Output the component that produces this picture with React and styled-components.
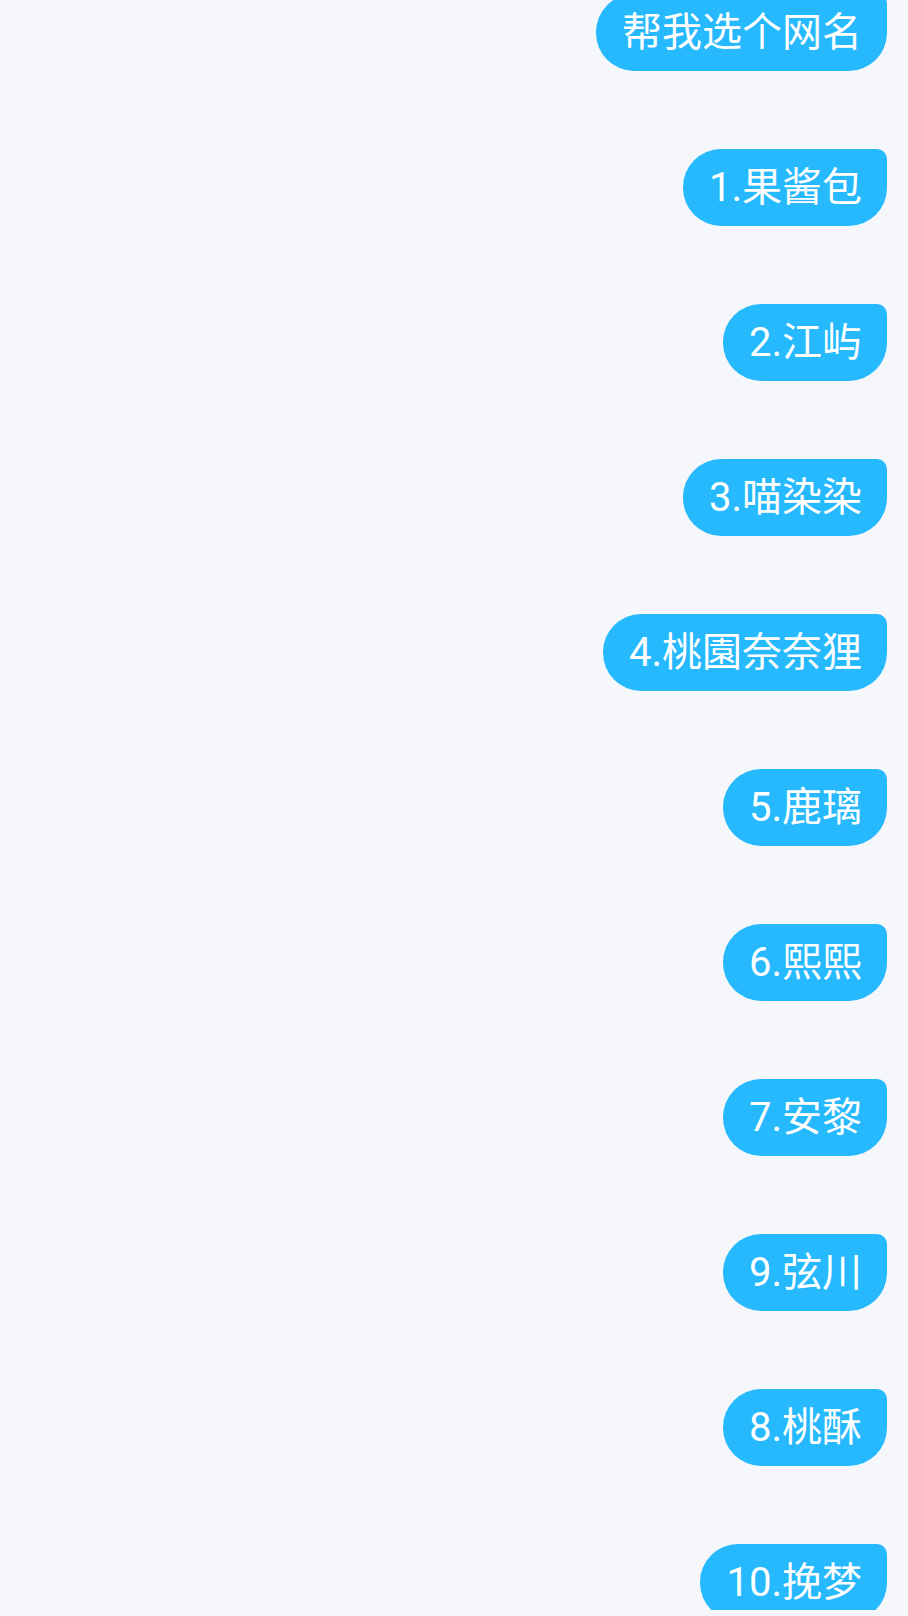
import React from 'react'
import styled, { createGlobalStyle } from 'styled-components'

const GlobalStyle = createGlobalStyle`
   html, body {
      margin: 0;
      padding: 0;
      background: #f5f7fa;
   }
`;

const names = [
   '帮我选个网名',
   '1.果酱包',
   '2.江屿',
   '3.喵染染',
   '4.桃園奈奈狸',
   '5.鹿璃',
   '6.熙熙',
   '7.安黎',
   '9.弦川',
   '8.桃酥',
   '10.挽梦',
];

const App = () => {
   return (
      <>
         <GlobalStyle />
         <Chat>
            {names.map((text, i) => (
               <Bubble key={i}>{text}</Bubble>
            ))}
         </Chat>
      </>
   )
}

const Chat = styled.div`
   display: flex;
   flex-direction: column;
   align-items: flex-end;
   gap: 78px;
   height: 1616px;
   overflow: hidden;
   margin-top: -6px;
   padding-right: 21px;
   box-sizing: border-box;
   background: #f5f7fa;
`;

const Bubble = styled.div`
   flex-shrink: 0;
   height: 77px;
   line-height: 77px;
   padding: 0 25px 0 26px;
   color: #ffffff;
   background: #26b9fe;
   border-radius: 38px 10px 38px 38px;
   font-family: Roboto, "Noto Sans CJK SC", sans-serif;
   font-size: 40px;
   white-space: nowrap;
`;

export default App
